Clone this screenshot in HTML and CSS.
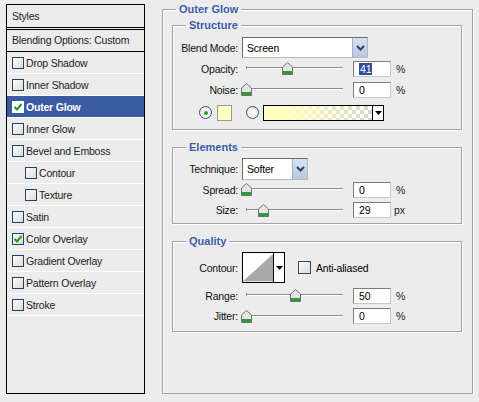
FILE: index.html
```html
<!DOCTYPE html>
<html lang="en">
<head>
    <meta charset="utf-8" />
    <meta name="viewport" content="width=device-width, initial-scale=1.0">
    <link rel="stylesheet" href="styles.css">
    <title>Layer Style</title>
</head>
<body>
<div class="dialog">
    <div class="styles-list">
        <div class="list-head">Styles</div>
        <div class="list-blend">Blending Options: Custom</div>
        <div class="list-item"><span class="check"></span>Drop Shadow</div>
        <div class="list-item"><span class="check"></span>Inner Shadow</div>
        <div class="list-item selected"><span class="check on"><svg width="10" height="10" viewBox="0 0 10 10"><path d="M1.5 5 L4 7.5 L8.5 2" fill="none" stroke="#1f9a1f" stroke-width="2"/></svg></span>Outer Glow</div>
        <div class="list-item"><span class="check"></span>Inner Glow</div>
        <div class="list-item"><span class="check"></span>Bevel and Emboss</div>
        <div class="list-item sub"><span class="check"></span>Contour</div>
        <div class="list-item sub"><span class="check"></span>Texture</div>
        <div class="list-item"><span class="check"></span>Satin</div>
        <div class="list-item"><span class="check on"><svg width="10" height="10" viewBox="0 0 10 10"><path d="M1.5 5 L4 7.5 L8.5 2" fill="none" stroke="#1f9a1f" stroke-width="2"/></svg></span>Color Overlay</div>
        <div class="list-item"><span class="check"></span>Gradient Overlay</div>
        <div class="list-item"><span class="check"></span>Pattern Overlay</div>
        <div class="list-item"><span class="check"></span>Stroke</div>
    </div>

    <fieldset class="group outer">
        <legend>Outer Glow</legend>

        <fieldset class="group structure">
            <legend>Structure</legend>
            <div class="row r-blend">
                <label class="lbl">Blend Mode:</label>
                <div class="select mode"><span class="sel-text">Screen</span><span class="sel-btn"><svg width="13" height="17" viewBox="0 0 13 17"><path d="M3 7 L6.5 10.5 L10 7" fill="none" stroke="#34405a" stroke-width="2"/></svg></span></div>
            </div>
            <div class="row r-slider">
                <label class="lbl">Opacity:</label>
                <div class="slider"><span class="track"></span><span class="thumb" style="left: 42px"><svg width="11" height="13" viewBox="0 0 11 13"><path d="M0.5 12.5 V5 L5.5 0.5 L10.5 5 V12.5 Z" fill="#e4e4e4" stroke="#6f6f6f"/><rect x="1" y="9" width="9" height="3" fill="#2e9a3a"/></svg></span></div>
                <div class="num"><span class="hl">41</span></div>
                <span class="unit">%</span>
            </div>
            <div class="row r-noise">
                <label class="lbl">Noise:</label>
                <div class="slider"><span class="track"></span><span class="thumb" style="left: 1px"><svg width="11" height="13" viewBox="0 0 11 13"><path d="M0.5 12.5 V5 L5.5 0.5 L10.5 5 V12.5 Z" fill="#e4e4e4" stroke="#6f6f6f"/><rect x="1" y="9" width="9" height="3" fill="#2e9a3a"/></svg></span></div>
                <div class="num">0</div>
                <span class="unit">%</span>
            </div>
            <div class="row r-color">
                <span class="radio on"></span>
                <span class="swatch"></span>
                <span class="radio second"></span>
                <div class="gradient"><span class="grad-fill"></span><span class="grad-btn"><svg width="7" height="4" viewBox="0 0 7 4"><path d="M0 0 H7 L3.5 4 Z" fill="#000"/></svg></span></div>
            </div>
        </fieldset>

        <fieldset class="group elements">
            <legend>Elements</legend>
            <div class="row r-tech">
                <label class="lbl">Technique:</label>
                <div class="select tech"><span class="sel-text">Softer</span><span class="sel-btn"><svg width="13" height="18" viewBox="0 0 13 18"><path d="M3 7 L6.5 10.5 L10 7" fill="none" stroke="#34405a" stroke-width="2"/></svg></span></div>
            </div>
            <div class="row r-spread">
                <label class="lbl">Spread:</label>
                <div class="slider"><span class="track"></span><span class="thumb" style="left: 1px"><svg width="11" height="13" viewBox="0 0 11 13"><path d="M0.5 12.5 V5 L5.5 0.5 L10.5 5 V12.5 Z" fill="#e4e4e4" stroke="#6f6f6f"/><rect x="1" y="9" width="9" height="3" fill="#2e9a3a"/></svg></span></div>
                <div class="num">0</div>
                <span class="unit">%</span>
            </div>
            <div class="row r-size">
                <label class="lbl">Size:</label>
                <div class="slider"><span class="track"></span><span class="thumb" style="left: 18px"><svg width="11" height="13" viewBox="0 0 11 13"><path d="M0.5 12.5 V5 L5.5 0.5 L10.5 5 V12.5 Z" fill="#e4e4e4" stroke="#6f6f6f"/><rect x="1" y="9" width="9" height="3" fill="#2e9a3a"/></svg></span></div>
                <div class="num">29</div>
                <span class="unit px">px</span>
            </div>
        </fieldset>

        <fieldset class="group quality">
            <legend>Quality</legend>
            <div class="row r-contour">
                <label class="lbl">Contour:</label>
                <div class="contour">
                    <svg class="curve" width="32" height="29" viewBox="0 0 32 29"><rect width="32" height="29" fill="#fff"/><path d="M0 29 L32 0 V29 Z" fill="#a9a9a9"/></svg>
                    <span class="grad-btn"><svg width="7" height="4" viewBox="0 0 7 4"><path d="M0 0 H7 L3.5 4 Z" fill="#000"/></svg></span>
                </div>
                <span class="check aa"></span>
                <span class="aa-text">Anti-aliased</span>
            </div>
            <div class="row r-range">
                <label class="lbl">Range:</label>
                <div class="slider"><span class="track"></span><span class="thumb" style="left: 50px"><svg width="11" height="13" viewBox="0 0 11 13"><path d="M0.5 12.5 V5 L5.5 0.5 L10.5 5 V12.5 Z" fill="#e4e4e4" stroke="#6f6f6f"/><rect x="1" y="9" width="9" height="3" fill="#2e9a3a"/></svg></span></div>
                <div class="num">50</div>
                <span class="unit">%</span>
            </div>
            <div class="row r-jitter">
                <label class="lbl">Jitter:</label>
                <div class="slider"><span class="track"></span><span class="thumb" style="left: 1px"><svg width="11" height="13" viewBox="0 0 11 13"><path d="M0.5 12.5 V5 L5.5 0.5 L10.5 5 V12.5 Z" fill="#e4e4e4" stroke="#6f6f6f"/><rect x="1" y="9" width="9" height="3" fill="#2e9a3a"/></svg></span></div>
                <div class="num">0</div>
                <span class="unit">%</span>
            </div>
        </fieldset>
    </fieldset>
</div>
</body>
</html>
```

FILE: styles.css
```css
body {
    margin: 0;
    background: #ececec;
    font-family: 'Liberation Sans', Arial, sans-serif;
    font-size: 10.5px;
    letter-spacing: -0.2px;
    color: #000;
    overflow: hidden;
}

.dialog {
    display: flex;
    align-items: flex-start;
    padding: 2px 0 0 6px;
}

/* left list */
.styles-list {
    box-sizing: border-box;
    width: 139px;
    height: 390px;
    margin-top: 2px;
    border: 1px solid #000;
    background: #ececec;
    color: #222;
}

.list-head {
    height: 22px;
    line-height: 22px;
    padding-left: 5px;
    border-bottom: 3px double #000;
}

.list-blend {
    height: 21px;
    line-height: 21px;
    padding-left: 5px;
    border-bottom: 1px solid #000;
}

.list-item {
    display: flex;
    align-items: center;
    height: 21px;
    padding-left: 5px;
    border-bottom: 1px solid #fff;
}

.list-item.sub {
    padding-left: 18px;
}

.list-item.selected {
    background: #3a5aa2;
    color: #fff;
    font-weight: bold;
}

.check {
    box-sizing: border-box;
    display: inline-flex;
    align-items: center;
    justify-content: center;
    width: 12px;
    height: 12px;
    margin-right: 2px;
    border: 1px solid #22426e;
    background: linear-gradient(135deg, #fbfbfb, #dcdcd6);
}

.selected .check {
    border-color: #fff;
    background: #fff;
}

/* right side */
.group {
    box-sizing: border-box;
    margin: 0;
    min-width: 0;
    border: 1px solid #a2a2a2;
    box-shadow: 1px 1px 0 #fff, inset 1px 1px 0 #fff;
}

.group legend {
    padding: 0 3px;
    margin-left: 13px;
    line-height: 14px;
    font-size: 11px;
    font-weight: bold;
    letter-spacing: 0;
    color: #3c5ba6;
}

.outer {
    width: 311px;
    height: 392px;
    margin-left: 17px;
    padding: 2px 10px 0 9px;
}

.outer > legend {
    margin-left: 4px;
}

.structure {
    padding: 5px 0 4px;
    margin-bottom: 10px;
}

.elements {
    padding: 4px 0 2px;
    margin-bottom: 10px;
}

.quality {
    padding: 4px 0 7px;
}

.row {
    display: flex;
    align-items: center;
}

.r-blend { height: 21px; }
.r-slider, .r-noise { height: 21px; }
.r-color { height: 25px; }
.r-tech { height: 22px; }
.r-spread { height: 19px; }
.r-size { height: 22px; }
.r-contour { height: 31px; }
.r-range { height: 25px; }
.r-jitter { height: 16px; }

.lbl {
    width: 65px;
    flex: none;
    text-align: right;
    color: #111;
}

.select {
    box-sizing: border-box;
    display: flex;
    align-items: stretch;
    margin-left: 4px;
    border: 1px solid #8e8e8e;
    border-color: #6c6c6c #b9b9b9 #b9b9b9 #6c6c6c;
    background: #fff;
}

.select.mode {
    width: 126px;
    height: 21px;
}

.select.tech {
    width: 66px;
    height: 22px;
}

.sel-text {
    flex: 1;
    padding-left: 4px;
    display: flex;
    align-items: center;
}

.sel-btn {
    width: 14px;
    display: flex;
    align-items: center;
    justify-content: center;
    background: linear-gradient(#d9e2f3, #b7c6e2);
    border-left: 1px solid #9fb0cf;
}

.slider {
    position: relative;
    width: 108px;
    height: 13px;
    margin-left: 2px;
    flex: none;
}

.track {
    position: absolute;
    left: 6px;
    right: 5px;
    top: 5px;
    height: 1px;
    background: #8d8d8d;
    border-bottom: 1px solid #fff;
}

.track::before {
    content: "";
    position: absolute;
    left: 0;
    top: -1px;
    width: 1px;
    height: 3px;
    background: #8d8d8d;
}

.thumb {
    position: absolute;
    top: 0;
    width: 11px;
    height: 13px;
    line-height: 0;
}

.num {
    box-sizing: border-box;
    width: 38px;
    height: 16px;
    margin-left: 5px;
    padding-left: 5px;
    line-height: 14px;
    background: #fff;
    border: 1px solid #b4b4b4;
    border-color: #7c7c7c #c9c9c9 #c9c9c9 #7c7c7c;
}

.hl {
    background: #2f4f9c;
    color: #fff;
    padding: 0 1px;
}

.unit {
    margin-left: 5px;
    color: #222;
}

.unit.px {
    margin-left: 3px;
}

.radio {
    box-sizing: border-box;
    width: 13px;
    height: 13px;
    border-radius: 50%;
    border: 1px solid #355173;
    background: radial-gradient(circle at 60% 60%, #fff, #e2e2dc);
    display: inline-flex;
    align-items: center;
    justify-content: center;
    flex: none;
}

.radio.on {
    margin-left: 26px;
}

.radio.on::after {
    content: "";
    width: 4px;
    height: 4px;
    border-radius: 50%;
    background: #21a121;
}

.radio.second {
    margin-left: 14px;
}

.swatch {
    box-sizing: border-box;
    width: 15px;
    height: 16px;
    margin-left: 5px;
    border: 1px solid #9a9a9a;
    background: #ffffc2;
}

.gradient {
    box-sizing: border-box;
    display: flex;
    width: 121px;
    height: 16px;
    margin-left: 4px;
    border: 1px solid #000;
}

.grad-fill {
    flex: 1;
    background:
        linear-gradient(to right, #ffffc2 20%, rgba(255, 255, 194, 0)),
        repeating-conic-gradient(#d6d6d6 0 25%, #fff 0 50%) 0 0 / 8px 8px;
}

.grad-btn {
    width: 10px;
    display: flex;
    align-items: center;
    justify-content: center;
    background: #fff;
    border-left: 1px solid #000;
}

.contour {
    box-sizing: border-box;
    display: flex;
    width: 43px;
    height: 31px;
    margin-left: 4px;
    border: 1px solid #000;
}

.curve {
    display: block;
}

.check.aa {
    width: 13px;
    height: 13px;
    margin-left: 13px;
    border-color: #2b4a78;
}

.aa-text {
    margin-left: 3px;
}
```
